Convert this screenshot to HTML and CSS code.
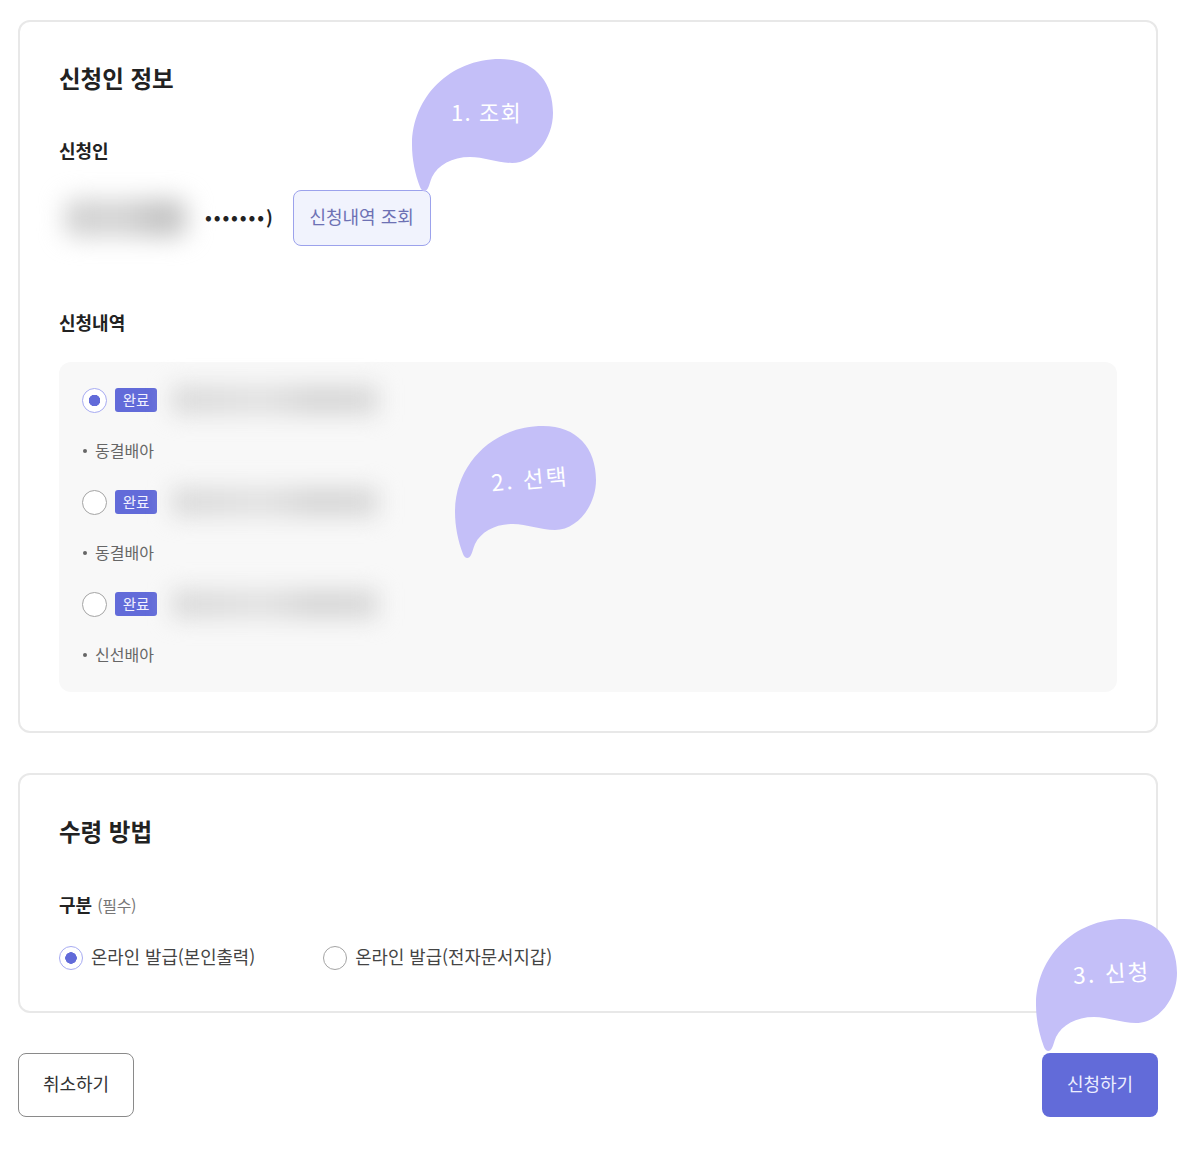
FILE: index.html
```html
<!DOCTYPE html>
<html lang="ko">
<head>
<meta charset="utf-8">
<title>신청</title>
<link rel="stylesheet" href="styles.css">
</head>
<body>
<svg class="defs" width="0" height="0" aria-hidden="true">
  <symbol id="bubble" viewBox="0 0 141 132">
    <path d="M8 128C3 115 0 100 0 86C0 38 38 0 88 0C122 0 141 22 141 54C141 80 122 104 100 104C85 104 72 98 58 98C40 98 26 106 20 118C18 123 17 127 16 129C14 133 10 133 8 128Z"/>
  </symbol>
</svg>
<main class="page">
  <section class="card">
    <h2 class="card-title">신청인 정보</h2>
    <h3 class="label label-first">신청인</h3>
    <div class="applicant">
      <div class="blur-name"></div>
      <span class="masked">•••••••)</span>
      <button class="lookup" type="button"><span class="nudge">신청내역 조회</span></button>
    </div>
    <h3 class="label label-list">신청내역</h3>
    <div class="panel">
      <div class="item">
        <div class="item-row">
          <span class="radio radio-on"></span>
          <span class="badge">완료</span>
          <div class="blur-line"></div>
        </div>
        <p class="item-sub">동결배아</p>
      </div>
      <div class="item">
        <div class="item-row">
          <span class="radio"></span>
          <span class="badge">완료</span>
          <div class="blur-line"></div>
        </div>
        <p class="item-sub">동결배아</p>
      </div>
      <div class="item">
        <div class="item-row">
          <span class="radio"></span>
          <span class="badge">완료</span>
          <div class="blur-line"></div>
        </div>
        <p class="item-sub">신선배아</p>
      </div>
    </div>
  </section>

  <section class="card card-second">
    <h2 class="card-title">수령 방법</h2>
    <h3 class="label label-kind">구분 <small class="required">(필수)</small></h3>
    <div class="options">
      <label class="option"><span class="radio radio-on"></span><span class="nudge">온라인 발급(본인출력)</span></label>
      <label class="option"><span class="radio"></span><span class="nudge">온라인 발급(전자문서지갑)</span></label>
    </div>
  </section>

  <div class="actions">
    <button class="btn btn-cancel" type="button"><span class="nudge">취소하기</span></button>
    <button class="btn btn-submit" type="button"><span class="nudge">신청하기</span></button>
  </div>

  <div class="bubble bubble-one"><svg class="bubble-shape"><use href="#bubble"/></svg><span class="bubble-text">1. 조회</span></div>
  <div class="bubble bubble-two"><svg class="bubble-shape"><use href="#bubble"/></svg><span class="bubble-text">2. 선택</span></div>
  <div class="bubble bubble-three"><svg class="bubble-shape"><use href="#bubble"/></svg><span class="bubble-text">3. 신청</span></div>
</main>
</body>
</html>
```
FILE: styles.css
```css
* { box-sizing: border-box; }
html, body { margin: 0; background: #fff; }
body {
  font-family: "Noto Sans CJK KR", "Noto Sans", sans-serif;
  color: #222;
  overflow-x: hidden;
}
.defs { position: absolute; }
.page {
  position: relative;
  width: 1194px;
  height: 1150px;
  padding: 20px 36px 0 18px;
}
.card {
  border: 2px solid #e8e8e8;
  border-radius: 12px;
  padding: 39px 39px 39px;
}
.card-second { margin-top: 40px; padding-bottom: 40px; }
.card-title {
  margin: 0;
  font-size: 23.5px;
  line-height: 34px;
  padding-bottom: 2px;
  font-weight: 700;
  color: #222;
}
.label {
  margin: 0;
  font-size: 18px;
  line-height: 24px;
  padding-bottom: 2px;
  font-weight: 700;
  color: #222;
}
.label-first { margin-top: 41px; }
.label-list { margin-top: 64px; }
.label-kind { margin-top: 42px; }
.required { font-size: 16px; font-weight: 400; color: #777; letter-spacing: -0.3px; }
.nudge { display: block; position: relative; top: -2px; }

.applicant {
  margin-top: 26px;
  display: flex;
  align-items: center;
  height: 56px;
}
.blur-name {
  width: 122px;
  height: 38px;
  margin-left: 6px;
  background: linear-gradient(90deg, #cfcfcf, #d6d6d6 45%, #c2c2c2 80%, #cacaca);
  border-radius: 10px;
  filter: blur(12px);
}
.masked {
  margin-left: 18px;
  font-size: 18px;
  font-weight: 700;
  letter-spacing: 1.9px;
  line-height: 22px;
  padding-bottom: 4px;
  color: #222;
}
.lookup {
  margin-left: 18px;
  width: 138px;
  height: 56px;
  padding: 0;
  border: 1.5px solid #9ca2ec;
  border-radius: 8px;
  background: #f1f3fd;
  color: #6d71b4;
  font: 400 18px/26px "Noto Sans CJK KR", sans-serif;
}

.panel {
  margin-top: 26px;
  height: 330px;
  padding: 26px 24px 24px;
  background: #f8f8f8;
  border-radius: 12px;
  display: flex;
  flex-direction: column;
  gap: 26px;
}
.item { display: flex; flex-direction: column; gap: 26px; }
.item-row { display: flex; align-items: center; height: 24px; }
.radio {
  flex: none;
  width: 25px;
  height: 25px;
  margin-left: -1px;
  border: 1.5px solid #a4a4a4;
  border-radius: 50%;
  background: #fff;
  display: inline-block;
}
.radio-on {
  border-color: #a7abf2;
  background: radial-gradient(circle, #626bd9 0 5.5px, #fff 6px);
}
.badge {
  margin-left: 8px;
  width: 42px;
  height: 24px;
  background: #626bd9;
  border-radius: 3px;
  color: #f2f2ff;
  font-size: 14.5px;
  line-height: 23px;
  text-align: center;
}
.blur-line {
  margin-left: 15px;
  width: 206px;
  height: 30px;
  background: linear-gradient(90deg, #dadada, #e2e2e2 45%, #d6d6d6 70%, #dadada);
  filter: blur(11px);
}
.item-sub {
  margin: 0;
  display: flex;
  align-items: center;
  height: 26px;
  padding-bottom: 1px;
  font-size: 16px;
  line-height: 23px;
  color: #666;
}
.item-sub::before {
  content: "";
  width: 4px;
  height: 4px;
  margin-right: 8px;
  margin-top: 1px;
  border-radius: 50%;
  background: #666;
}

.options {
  margin-top: 26px;
  display: flex;
  gap: 68px;
}
.option {
  display: flex;
  align-items: center;
  gap: 8px;
  height: 26px;
  font-size: 17.8px;
  line-height: 26px;
  color: #444;
}
.option .radio { width: 24px; height: 24px; margin-left: 0; }

.actions {
  margin-top: 40px;
  display: flex;
  justify-content: space-between;
}
.btn {
  width: 116px;
  height: 64px;
  padding: 0;
  border-radius: 8px;
  font: 400 18px/26px "Noto Sans CJK KR", sans-serif;
}
.btn-cancel { background: #fff; border: 1.5px solid #8a8a8a; color: #333; }
.btn-submit { background: #626bd9; border: 0; color: #eceeff; }

.bubble { position: absolute; width: 141px; height: 132px; }
.bubble-shape { display: block; width: 141px; height: 132px; fill: #c4bff8; }
.bubble-text {
  position: absolute;
  color: #fff;
  font-size: 22.5px;
  font-weight: 400;
  line-height: 30px;
  letter-spacing: 2.2px;
  white-space: nowrap;
}
.bubble-one { left: 412px; top: 59px; }
.bubble-one .bubble-text { left: 39px; top: 37px; font-size: 22px; letter-spacing: 1.2px; }
.bubble-two { left: 455px; top: 426px; }
.bubble-two .bubble-text { left: 36px; top: 37px; transform: rotate(-5deg); }
.bubble-three { left: 1036px; top: 919px; }
.bubble-three .bubble-text { left: 37px; top: 38px; transform: rotate(-3deg); }
```
